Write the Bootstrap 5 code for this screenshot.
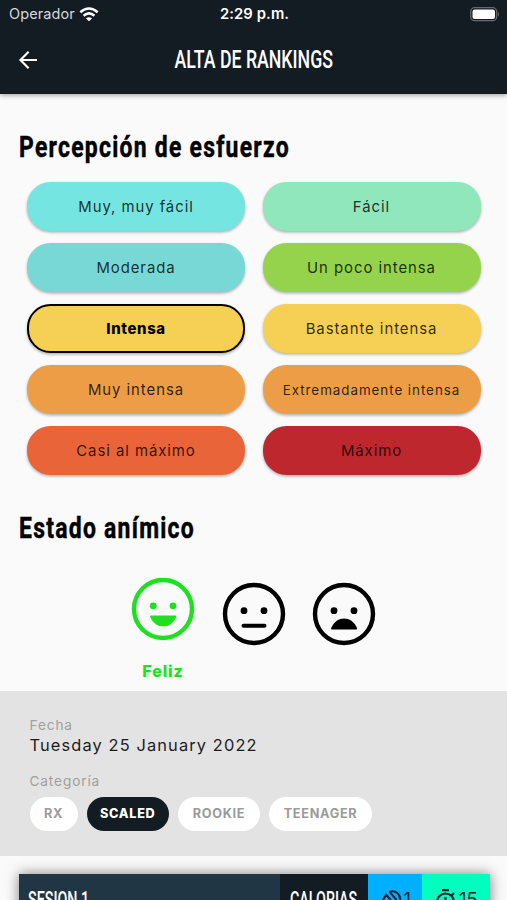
<!DOCTYPE html>
<html lang="es">
<head>
<meta charset="utf-8">
<meta name="viewport" content="width=device-width, initial-scale=1">
<title>Alta de rankings</title>
<link href="https://cdn.jsdelivr.net/npm/bootstrap@5.3.0/dist/css/bootstrap.min.css" rel="stylesheet">
<style>
html{height:100%;overflow:hidden}
body{height:900px;overflow:hidden;background:#fafafa;color:#000;font-family:Inter,"Liberation Sans",sans-serif;line-height:1}
svg{display:block;flex:none}
.top-area{height:93.5px;background:#141c23;color:#fff;box-shadow:0 1px 5px rgba(0,0,0,.4)}
.status{height:28px;padding:0 7px 0 9px;font-size:14.5px}
.status>div{flex:1 1 0}
.carrier{color:#d5d8da;letter-spacing:.1px}
.clock{font-weight:600;font-size:14.8px;letter-spacing:.1px}
.title-bar{height:64px;padding:0 18px}
.title-bar>div{flex:1 1 0}
.osw{font-family:Roboto,sans-serif;font-weight:500;white-space:nowrap;display:inline-block;transform:scaleX(.69)}
.page-title{font-size:25.7px;flex:none}
.section-title{font-family:Roboto,sans-serif;font-size:29px;font-weight:700;line-height:36px;letter-spacing:1.6px;transform-origin:0 50%;transform:scaleX(.79);white-space:nowrap;margin:0 0 0 19px;width:420px;-webkit-text-stroke:.5px #000}
.s1{padding-top:35px}
.efforts{display:grid;grid-template-columns:218px 218px;column-gap:17.5px;row-gap:12px;padding:17px 0 0 27px}
.pill{height:49px;border:0;border-radius:23.5px;box-shadow:0 1.5px 3px rgba(0,0,0,.3);padding:0;font-size:14.9px;letter-spacing:.95px;color:rgba(0,0,0,.8);line-height:50px}
.pill.chosen{border:2px solid #000;font-weight:800;color:#000;line-height:46px;letter-spacing:.65px}
.c1{background:#75e5e1}.c2{background:#8fe7bb}.c3{background:#78d8d6}.c4{background:#94d34b}.c5{background:#f6cf55}
.c6{background:#ed9d46}.c7{background:#e96439}.c8{background:#bf272f}
.pill.tight{font-size:13.4px;letter-spacing:.95px}
.s2{padding-top:35px}
.moods{height:145px;padding:31px 0 0 131px;gap:26.5px}
.mood{width:64px}
.mood.off{padding-top:5px}
.happy{color:#1fe01f;font-weight:800;font-size:16px;letter-spacing:.9px}
.happy span{margin-top:22px}
.details{height:165.5px;background:#e3e3e3;padding:26px 30px 0 29.500px}
.lbl{font-size:13.6px;letter-spacing:.9px;color:#a0a0a0;line-height:16px}
.date{font-size:16.4px;letter-spacing:1.12px;color:#1c1c1c;line-height:20px;margin:2px 0 18px}
.chips{margin-top:8px;gap:9px}
.chip{height:34.5px;line-height:34px;border-radius:18px;background:#fff;color:#9b9b9b;font-weight:700;font-size:12.7px;letter-spacing:.7px;text-align:center}
.chip.on{background:#141c23;color:#fff;font-weight:800}
.w1{width:48px}.w2{width:82.5px}.w3{width:82px}.w4{width:103px}
.session{margin:18px 0 0 19px;width:470.5px;height:60px;box-shadow:0 0 12px rgba(0,0,0,.5);color:#fff}
.session .osw{font-size:22px;line-height:24px;transform-origin:0 50%;transform:scaleX(.65)}
.name-cell{width:260.5px;background:#213644;padding:14px 0 0 9px}
.cal-cell{width:88px;background:#141c23;padding:14px 0 0 10px}
.turn-cell{width:54.5px;background:#00b0ff;color:#152330;padding:15px 0 0 12px}
.time-cell{width:67.5px;background:#00ffbf;color:#152330;padding:15px 0 0 12px}
.num{font-size:18.5px;line-height:20px;margin-left:2px}
</style>
<script src="https://cdn.jsdelivr.net/npm/bootstrap@5.3.0/dist/js/bootstrap.bundle.min.js"></script>
</head>
<body>
<header class="top-area">
  <div class="status d-flex align-items-center">
    <div class="d-flex align-items-center"><span class="carrier">Operador</span>
      <svg class="ms-1" width="20" height="15" viewBox="0 0 20 15"><g fill="none" stroke="#fff" stroke-width="2.5"><path d="M1.3 5.3Q10-2.3 18.7 5.3"/><path d="M4.6 8.7Q10 4 15.4 8.7"/></g><path d="M10 14.2L7 11.4Q10 8.9 13 11.4Z" fill="#fff"/></svg>
    </div>
    <span class="clock">2:29 p.m.</span>
    <div class="d-flex justify-content-end"><svg width="30" height="15" viewBox="0 0 30 15"><rect x=".7" y=".7" width="26" height="13" rx="4" fill="none" stroke="#66696e" stroke-width="1.3"/><rect x="2.5" y="2.5" width="22.5" height="9.5" rx="2.2" fill="#fff"/><path d="M28 4.8Q30 7.2 28 9.7Z" fill="#66696e"/></svg></div>
  </div>
  <div class="title-bar d-flex align-items-center">
    <div><svg width="20" height="20" viewBox="0 0 20 20" fill="none" stroke="#fff" stroke-width="2.2"><path d="M10.6 1.8L2.5 10L10.6 18.2M2.5 10H19"/></svg></div>
    <span class="osw page-title">ALTA DE RANKINGS</span>
    <div></div>
  </div>
</header>
<main>
  <section class="s1">
    <h1 class="section-title">Percepción de esfuerzo</h1>
    <div class="efforts">
      <button class="pill c1">Muy, muy fácil</button><button class="pill c2">Fácil</button>
      <button class="pill c3">Moderada</button><button class="pill c4">Un poco intensa</button>
      <button class="pill c5 chosen">Intensa</button><button class="pill c5">Bastante intensa</button>
      <button class="pill c6">Muy intensa</button><button class="pill c6 tight">Extremadamente intensa</button>
      <button class="pill c7">Casi al máximo</button><button class="pill c8">Máximo</button>
    </div>
  </section>
  <section class="s2">
    <h2 class="section-title">Estado anímico</h2>
    <div class="moods d-flex">
      <div class="mood happy d-flex flex-column align-items-center">
        <svg width="64" height="64" viewBox="0 0 64 64" fill="currentColor"><circle cx="32" cy="32" r="29" fill="none" stroke="currentColor" stroke-width="4.4"/><circle cx="22.2" cy="28.8" r="3.4"/><circle cx="42" cy="28.8" r="3.4"/><path d="M20 38.6H44.600Q45.800 38.600 45.200 40C42.500 46.500 37.500 49.500 32.300 49.500S22 46.500 19.200 40Q18.700 38.600 20 38.600Z"/></svg>
        <span>Feliz</span>
      </div>
      <div class="mood off"><svg width="64" height="64" viewBox="0 0 64 64"><circle cx="32" cy="32" r="29" fill="none" stroke="#000" stroke-width="4.4"/><circle cx="22" cy="28.700" r="3.400"/><circle cx="42" cy="28.700" r="3.400"/><path d="M21.500 43.800H42.500" stroke="#000" stroke-width="4" stroke-linecap="round"/></svg></div>
      <div class="mood off"><svg width="64" height="64" viewBox="0 0 64 64"><circle cx="32" cy="32" r="29" fill="none" stroke="#000" stroke-width="4.4"/><circle cx="22" cy="28.700" r="3.400"/><circle cx="42" cy="28.700" r="3.400"/><path d="M20 47.500Q18.600 47.500 19.200 46C22 39.500 27 36.500 32 36.500S42.300 39.500 45 46Q45.500 47.500 44.200 47.500Z"/></svg></div>
    </div>
  </section>
  <section class="details">
    <div class="lbl">Fecha</div>
    <div class="date">Tuesday 25 January 2022</div>
    <div class="lbl">Categoría</div>
    <div class="chips d-flex">
      <span class="chip w1">RX</span><span class="chip on w2">SCALED</span><span class="chip w3">ROOKIE</span><span class="chip w4">TEENAGER</span>
    </div>
  </section>
  <section class="session d-flex">
    <div class="name-cell"><span class="osw">SESION 1</span></div>
    <div class="cal-cell"><span class="osw">CALORIAS</span></div>
    <div class="turn-cell d-flex"><svg width="22" height="22" viewBox="0 0 22 22" fill="none" stroke="currentColor" stroke-width="2"><path d="M9.500 2.800C15.500.6 20.500 5.500 20.200 11.500A9 9 0 0 1 12 20M9.500 2.800L16.500 11M2 12.500L6.200 5.800L13.500 14.500L8.500 20"/></svg><span class="num">1</span></div>
    <div class="time-cell d-flex"><svg width="23" height="24" viewBox="0 0 23 24" fill="none" stroke="currentColor" stroke-width="2.200"><path d="M8 1.200H15M11.500 8V14M17.800 6.200L20 4"/><circle cx="11.500" cy="13" r="8.500"/></svg><span class="num">15</span></div>
  </section>
</main>
</body>
</html>
